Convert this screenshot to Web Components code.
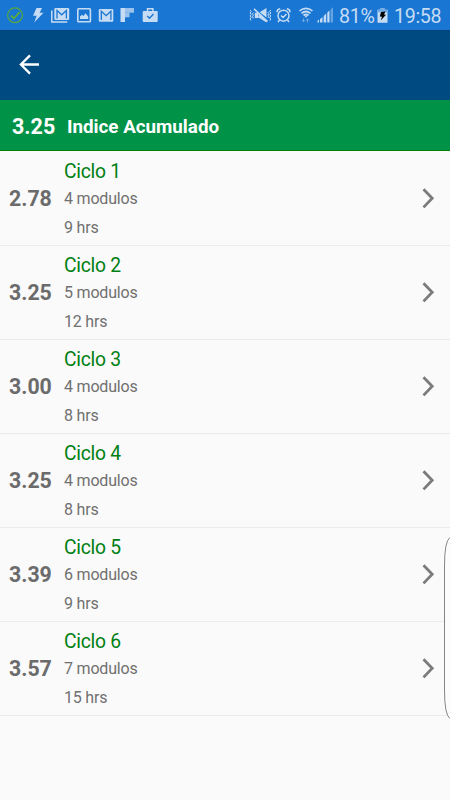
<!DOCTYPE html>
<html lang="es">
<head>
<meta charset="utf-8">
<title>Indice Acumulado</title>
<style>
body {
    margin: 0;
    background-color: #fafafa;
    font-family: Roboto, "Liberation Sans", sans-serif;
}
</style>
</head>
<body>
<grades-screen></grades-screen>

<script>
// every icon is drawn on a 30px high strip, the first value is its width
const icons = {
    check: [17, `<circle cx="8" cy="15.3" r="7.4" fill="none" stroke="#5aaa3c" stroke-width="1.2"/><path d="M4 15.5l3 3 5.5-6.3" fill="none" stroke="#5aaa3c" stroke-width="1.8"/>`],
    bolt: [12, `<path d="M4.5 8H10L7.7 12.8H11.5L2.2 22.5 4.7 15.7H1z"/>`],
    mails: [19, `<path d="M4.5 8h12.5q1.2 0 1.2 1.2v9.6q0 1.2-1.2 1.2h-12.5q-1.2 0-1.2-1.2V9.2q0-1.2 1.2-1.2z"/><path d="M.8 10.5v11.5h15.5" fill="none" stroke="#c5dcf4" stroke-width="1.5"/><path d="M6 18.500V10.5l4.700 4.300 4.700-4.300v8" fill="none" stroke="#1976d2" stroke-width="1.300"/>`],
    picture: [15, `<rect x=".8" y="8.8" width="12.6" height="13" rx=".8" fill="none" stroke="#c5dcf4" stroke-width="1.6"/><path d="M3 19v-2.5l2-1.7 1.5 1.2 2-2.7 2.7 3.2v2.5z"/>`],
    mail: [17, `<rect x=".8" y="9" width="14.5" height="12.7" rx="1.2"/><path d="M3.3 20v-8.8l4.8 4.5 4.8-4.500V20" fill="none" stroke="#1976d2" stroke-width="1.3"/>`],
    flip: [15, `<path d="M.5 8H5v14H.5z"/><path d="M5 8h9v4.7H5z" opacity=".75"/><path d="M5 12.7h4.5v4.6H5z" opacity=".75"/>`],
    bag: [17, `<path d="M1.7 11h13q1 0 1 1v9q0 1-1 1h-13q-1 0-1-1v-9q0-1 1-1z"/><path d="M5.5 11V8.7h5.4V11" fill="none" stroke="#c5dcf4" stroke-width="1.5"/><path d="M5.3 16l2.2 2.2 4-4.2" fill="none" stroke="#1976d2" stroke-width="1.4"/>`],
    mute: [23, `<path d="M5.8 12.7h3.7V18H5.8zM10.7 12.3L17.5 8v9.500zM9.5 17.5l1-4 7 6.500v2.500z"/><path d="M5 8.8l13.500 12.700" fill="none" stroke="#c5dcf4" stroke-width="1.600"/><path d="M1 10l1.200 1.500L1 13l1.200 1.500L1 16l1.200 1.500L1 19l1 1.500M4.300 12.500l-.8 1.300.8 1.500-.8 1.500.8 1.500M21.800 10l-1.200 1.500 1.200 1.500-1.200 1.500 1.200 1.500-1.200 1.500 1.200 1.500-1 1.500M18.900 12l.8 1.500-.8 1.500.8 1.500-.8 1.500" fill="none" stroke="#c5dcf4" stroke-width="1"/>`],
    alarm: [16, `<circle cx="7.5" cy="15.7" r="5.5" fill="none" stroke="#c5dcf4" stroke-width="1.5"/><path d="M1 12.2Q1 9 4.2 8.7M14 12.2Q14 9 10.8 8.7M3.5 20L2 22M11.5 20l1.5 2M4.9 15.5l2.2 2 3.4-3.6" fill="none" stroke="#c5dcf4" stroke-width="1.5"/>`],
    wifi: [14, `<path d="M.5 10.9Q7 5.7 13.5 10.9M2.5 13.3Q7 9.7 11.5 13.3M4.5 15.5Q7 13.5 9.5 15.5" fill="none" stroke="#c5dcf4" stroke-width="1.7"/><path d="M5.5 15.8h3L7 17.8z"/><path d="M4.5 18.5v3.3M3.1 20.3l1.4 1.6 1.4-1.6M8.500 22.300V19M7.100 20.400l1.400-1.600 1.400 1.600" fill="none" stroke="#72aae6" stroke-width="1"/>`],
    signal: [17, `<path d="M.5 22.5v-1.7l1.5-1.3v3zM3 22.5v-3.3l2.5-2.2v5.5zM6.7 22.5v-6.6l2.5-2.300v8.900zM10.300 22.500V12.500l2.200-2v12z"/><path d="M13.6 22.500V9.500L16 7.300v15.200z" opacity=".45"/>`],
    battery: [12, `<path d="M3.5 8.2h4v1.500H10.500v13H.5V9.700h3z"/><path d="M.5 9.7h10v2.500H.5zM3.5 8.2h4v1.500h-4z" fill="#72aae6"/><path d="M4 12l4.500-.5-1.500 3 2 .2-5.300 5.800 1.300-3.800-2.200-.2z" fill="#000"/>`]
}

class StatusIcon extends HTMLElement {
    connectedCallback() {
        const [width, shapes] = icons[this.getAttribute('name')]
        this.attachShadow({ mode: 'open' }).innerHTML = `
<style>
:host {
    display: block;
    flex: none;
    height: 30px;
}

svg {
    display: block;
    fill: #c5dcf4;
}
</style>
<svg width="${width}" height="30" viewBox="0 0 ${width} 30">${shapes}</svg>
`
    }
}

class StatusBar extends HTMLElement {
    connectedCallback() {
        this.attachShadow({ mode: 'open' }).innerHTML = `
<style>
:host {
    display: flex;
    justify-content: space-between;
    box-sizing: border-box;
    height: 30px;
    padding: 0 9px 0 7px;
    background-color: #1976d2;
    color: #c5dcf4;
    font-size: 19.6px;
    letter-spacing: -.3px;
    line-height: 33px;
}

.group {
    display: flex;
}

.left {
    gap: 7px;
}

.left status-icon:first-child {
    margin-right: 1px;
}

.percent {
    width: 35px;
    margin: 0 3px 0 5px;
    white-space: nowrap;
}

.time {
    width: 47px;
    margin-left: 5px;
    white-space: nowrap;
}
</style>

<div class="group left">
    <status-icon name="check"></status-icon>
    <status-icon name="bolt"></status-icon>
    <status-icon name="mails"></status-icon>
    <status-icon name="picture" style="margin-right:-1px"></status-icon>
    <status-icon name="mail" style="margin-right:-2px"></status-icon>
    <status-icon name="flip"></status-icon>
    <status-icon name="bag"></status-icon>
</div>
<div class="group">
    <status-icon name="mute" style="margin-right:4px"></status-icon>
    <status-icon name="alarm" style="margin-right:7px"></status-icon>
    <status-icon name="wifi" style="margin-right:4px"></status-icon>
    <status-icon name="signal"></status-icon>
    <span class="percent">81%</span>
    <status-icon name="battery"></status-icon>
    <span class="time">19:58</span>
</div>
`
    }
}

class AppToolbar extends HTMLElement {
    connectedCallback() {
        this.attachShadow({ mode: 'open' }).innerHTML = `
<style>
:host {
    display: flex;
    align-items: center;
    box-sizing: border-box;
    height: 70px;
    padding: 0 0 2px 19px;
    border-top: 1px solid #004275;
    background-color: #004a82;
}
</style>
<svg width="21" height="21" viewBox="0 0 21 21" fill="none" stroke="#fff" stroke-width="2.3">
    <path d="M20 10.5H2M11 1.4L1.9 10.5l9.1 9.1"/>
</svg>
`
    }
}

class TotalIndex extends HTMLElement {
    connectedCallback() {
        this.attachShadow({ mode: 'open' }).innerHTML = `
<style>
:host {
    display: flex;
    align-items: center;
    box-sizing: border-box;
    height: 51px;
    padding: 4px 0 0 12px;
    border-bottom: 1px solid #008000;
    background-color: #009348;
    color: #fff;
    font-weight: bold;
}

.value {
    width: 55px;
    font-size: 21.5px;
    line-height: 26px;
}

.label {
    font-size: 18.8px;
    line-height: 26px;
}
</style>
<span class="value"><slot name="value"></slot></span>
<span class="label"><slot></slot></span>
`
    }
}

class CycleRow extends HTMLElement {
    connectedCallback() {
        this.attachShadow({ mode: 'open' }).innerHTML = `
<style>
:host {
    display: flex;
    align-items: center;
    box-sizing: border-box;
    height: 94px;
    padding: 0 15px 0 9px;
    border-bottom: 1px solid #ebebeb;
    color: #6b6b6b;
}

.average {
    width: 55px;
    padding-bottom: 1px;
    font-size: 21.3px;
    font-weight: bold;
}

.info {
    flex: 1;
    padding-top: 2px;
    font-size: 16px;
    letter-spacing: -.2px;
    color: #707070;
}

.info div {
    height: 29px;
    line-height: 29px;
}

.info .name {
    height: 27px;
    font-size: 19.3px;
    letter-spacing: -.25px;
    color: #008013;
}
</style>
<div class="average"><slot name="average"></slot></div>
<div class="info">
    <div class="name"><slot></slot></div>
    <div><slot name="modules"></slot></div>
    <div><slot name="hours"></slot></div>
</div>
<svg width="13" height="21" viewBox="0 0 13 21" fill="none" stroke="#7b7b7b" stroke-width="2.8">
    <path d="M1.5 1.2l8.700 9.100-8.700 9.100"/>
</svg>
`
    }
}

// handle of the edge panel, floats over the list
class EdgeHandle extends HTMLElement {
    connectedCallback() {
        this.attachShadow({ mode: 'open' }).innerHTML = `
<style>
:host {
    display: block;
    position: absolute;
    top: 536px;
    right: 0;
}

svg {
    display: block;
}
</style>
<svg width="6" height="184" viewBox="0 0 6 184">
    <path d="M6 1.5Q.5 5 .5 30V154Q.5 179 6 182.5" fill="#fcfcfc" stroke="#858585" stroke-width="1"/>
</svg>
`
    }
}

const cycles = [
    ['2.78', 'Ciclo 1', 4, 9],
    ['3.25', 'Ciclo 2', 5, 12],
    ['3.00', 'Ciclo 3', 4, 8],
    ['3.25', 'Ciclo 4', 4, 8],
    ['3.39', 'Ciclo 5', 6, 9],
    ['3.57', 'Ciclo 6', 7, 15]
]

class GradesScreen extends HTMLElement {
    connectedCallback() {
        const rows = cycles.map(([average, name, modules, hours]) => `
<cycle-row>
    <span slot="average">${average}</span>
    ${name}
    <span slot="modules">${modules} modulos</span>
    <span slot="hours">${hours} hrs</span>
</cycle-row>`).join('')

        this.attachShadow({ mode: 'open' }).innerHTML = `
<style>
:host {
    display: flex;
    flex-direction: column;
    position: relative;
    height: 800px;
    overflow: hidden;
    background-color: #fafafa;
}

.list {
    padding-top: 1px;
}
</style>
<status-bar></status-bar>
<app-toolbar></app-toolbar>
<total-index><span slot="value">3.25</span>Indice Acumulado</total-index>
<div class="list">${rows}</div>
<edge-handle></edge-handle>
`
    }
}

customElements.define('status-icon', StatusIcon)
customElements.define('status-bar', StatusBar)
customElements.define('app-toolbar', AppToolbar)
customElements.define('total-index', TotalIndex)
customElements.define('cycle-row', CycleRow)
customElements.define('edge-handle', EdgeHandle)
customElements.define('grades-screen', GradesScreen)
</script>
</body>
</html>
